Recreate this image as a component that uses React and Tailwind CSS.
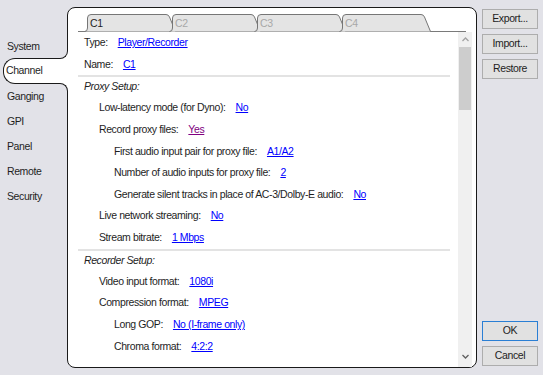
import React from 'react';

const navItems = ['System', 'Channel', 'Ganging', 'GPI', 'Panel', 'Remote', 'Security'];
const tabs = ['C1', 'C2', 'C3', 'C4'];

// level: 0 = top rows, 1 = inside a section, 2 = nested
const rows = [
    { label: 'Type:', value: 'Player/Recorder', level: 0 },
    { label: 'Name:', value: 'C1', level: 0 },
    { sep: true },
    { header: 'Proxy Setup:' },
    { label: 'Low-latency mode (for Dyno):', value: 'No', level: 1 },
    { label: 'Record proxy files:', value: 'Yes', level: 1, visited: true },
    { label: 'First audio input pair for proxy file:', value: 'A1/A2', level: 2 },
    { label: 'Number of audio inputs for proxy file:', value: '2', level: 2 },
    { label: 'Generate silent tracks in place of AC-3/Dolby-E audio:', value: 'No', level: 2 },
    { label: 'Live network streaming:', value: 'No', level: 1 },
    { label: 'Stream bitrate:', value: '1 Mbps', level: 1 },
    { sep: true },
    { header: 'Recorder Setup:' },
    { label: 'Video input format:', value: '1080i', level: 1 },
    { label: 'Compression format:', value: 'MPEG', level: 1 },
    { label: 'Long GOP:', value: 'No (I-frame only)', level: 2 },
    { label: 'Chroma format:', value: '4:2:2', level: 2 },
];

const indent = ['pl-[6px]', 'pl-[21px]', 'pl-[36px]'];

const Tab = ({ name, active }) => (
    <div className="relative w-[85px] h-[19px] shrink-0">
        <svg className="absolute left-0 top-0 overflow-visible" width="93" height="19" viewBox="0 0 93 19">
            <path
                d="M0.5,18.5 Q3.5,18.5 3.5,15 L3.5,5 Q3.5,1.5 7,1.5 L82,1.5 Q84.5,1.5 85.5,4 L91.5,18.5"
                fill="#e4e4e4"
                stroke="#767676"
                strokeWidth="1"
            />
        </svg>
        <span className={`absolute left-[6px] top-[3px] ${active ? 'text-[#1e1e1e]' : 'text-[#a8a8a8]'}`}>{name}</span>
    </div>
);

const Button = ({ children, primary, className = '' }) => (
    <button
        className={`w-[56px] h-[20px] bg-[#e1e1e1] border text-[#1e1e1e] flex items-center justify-center ${primary ? 'border-[#2a7fd4]' : 'border-[#adadad]'} ${className}`}
    >
        {children}
    </button>
);

export default function App() {
    return (
        <div className="w-[543px] h-[375px] bg-[#e2e2e8] flex overflow-hidden font-['Liberation_Sans',Arial,sans-serif] text-[10.5px] tracking-[-0.4px] text-[#1e1e1e]">
            {/* Left category list */}
            <div className="w-[67px] shrink-0 pt-[34px] flex flex-col">
                {navItems.map((item) =>
                    item === 'Channel' ? (
                        <div
                            key={item}
                            className="relative z-10 h-[26px] -mt-px -mr-px ml-[3px] pl-[2px] flex items-center bg-white border border-r-0 border-[#1a1a1a] rounded-l-[12px]"
                        >
                            {item}
                            <div className="absolute right-0 top-[-9px] w-[9px] h-[9px] bg-white">
                                <div className="w-full h-full bg-[#e2e2e8] border-r border-b border-[#1a1a1a] rounded-br-[8px]" />
                            </div>
                            <div className="absolute right-0 bottom-[-9px] w-[9px] h-[9px] bg-white">
                                <div className="w-full h-full bg-[#e2e2e8] border-r border-t border-[#1a1a1a] rounded-tr-[8px]" />
                            </div>
                        </div>
                    ) : (
                        <div key={item} className="h-[25px] pl-[7px] flex items-center">
                            {item}
                        </div>
                    )
                )}
            </div>

            {/* Main panel */}
            <div className="w-[410px] h-[361px] mt-[7px] shrink-0 bg-white border border-[#1a1a1a] rounded-[8px] pl-[10px] pr-[4px] pt-[5px] flex flex-col">
                <div className="flex h-[19px] border-b border-[#7a7a7a] mr-[6px]">
                    <div className="w-[6px] shrink-0" />
                    {tabs.map((t, i) => (
                        <Tab key={t} name={t} active={i === 0} />
                    ))}
                </div>

                <div className="flex flex-1 min-h-0">
                    <div className="flex-1 flex flex-col">
                        {rows.map((r, i) => {
                            if (r.sep) return <div key={i} className="h-[2px] shrink-0 bg-[#e3e3e3] mr-[8px]" />;
                            if (r.header)
                                return (
                                    <div key={i} className="h-[20px] shrink-0 pl-[6px] flex items-center italic">
                                        {r.header}
                                    </div>
                                );
                            return (
                                <div key={i} className={`h-[21.65px] shrink-0 flex items-center gap-[10px] ${indent[r.level]}`}>
                                    <span>{r.label}</span>
                                    <span className={`underline ${r.visited ? 'text-[#800080]' : 'text-[#0000ff]'}`}>{r.value}</span>
                                </div>
                            );
                        })}
                    </div>

                    {/* Scrollbar */}
                    <div className="w-[14px] shrink-0 bg-[#f0f0f0] flex flex-col items-stretch pb-[3px]">
                        <div className="h-[15px] flex items-center justify-center">
                            <svg width="7" height="5" viewBox="0 0 7 5">
                                <path d="M0.5,4 L3.5,1 L6.5,4" fill="none" stroke="#a3a3a3" strokeWidth="1.3" />
                            </svg>
                        </div>
                        <div className="h-[63px] bg-[#cdcdcd] mx-[1px]" />
                        <div className="flex-1" />
                        <div className="h-[15px] flex items-center justify-center">
                            <svg width="7" height="5" viewBox="0 0 7 5">
                                <path d="M0.5,1 L3.5,4 L6.5,1" fill="none" stroke="#606060" strokeWidth="1.3" />
                            </svg>
                        </div>
                    </div>
                </div>
            </div>

            {/* Right buttons */}
            <div className="flex-1 pl-[5px] pt-[9px] pb-[9px] flex flex-col gap-[5px]">
                <Button>Export...</Button>
                <Button>Import...</Button>
                <Button>Restore</Button>
                <Button primary className="mt-auto">OK</Button>
                <Button>Cancel</Button>
            </div>
        </div>
    );
}
